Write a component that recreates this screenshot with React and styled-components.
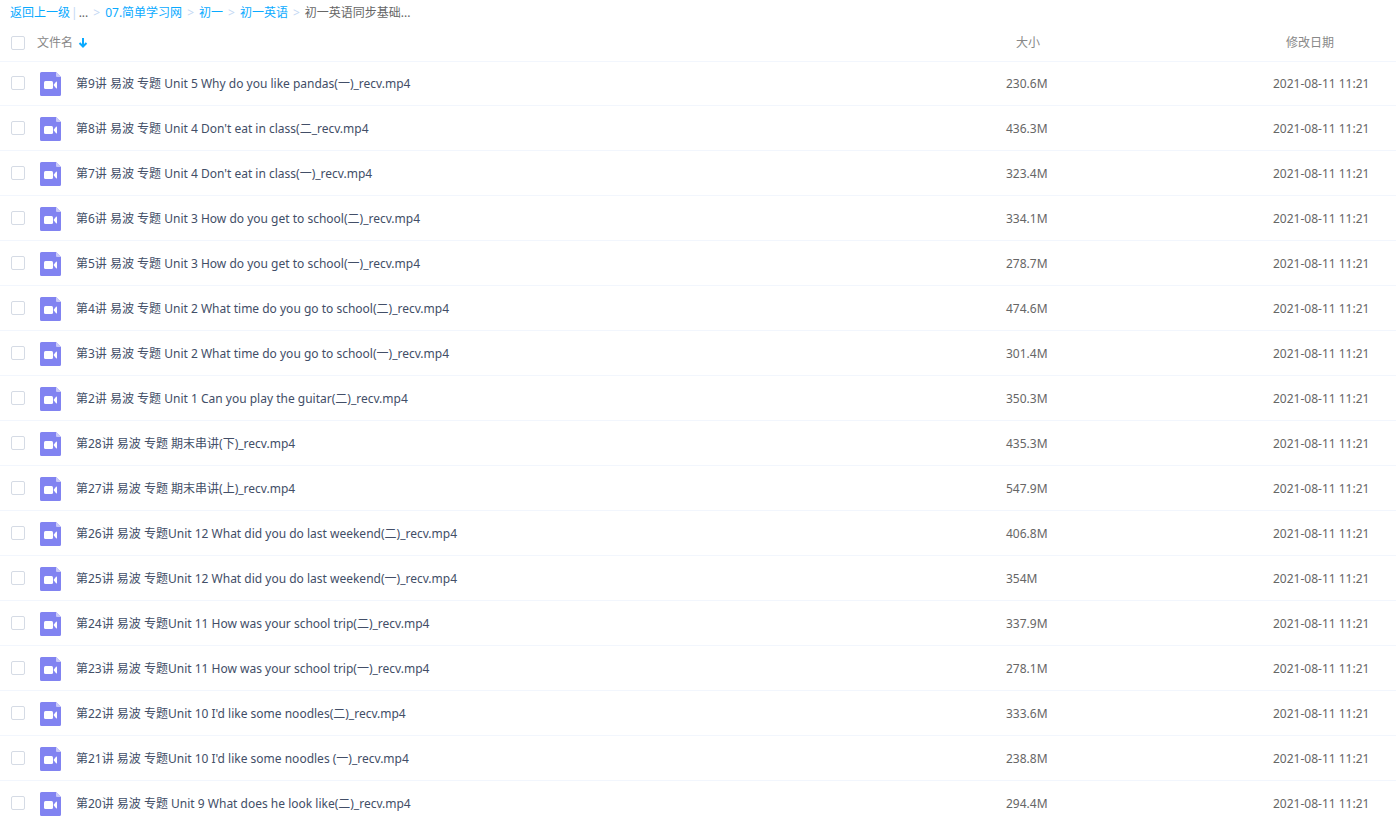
import React from 'react';
import styled, { createGlobalStyle } from "styled-components";

const GlobalStyle = createGlobalStyle`
body{
    margin:0;
    background-color:#fff;
    color:#424e67;
    font-family:"Noto Sans", "Noto Sans CJK SC", sans-serif;
    font-size:12px;
    line-height:16px;
}
`;

const Page = styled.main`
overflow:hidden;
`;

const Breadcrumb = styled.nav`
display:flex;
align-items:center;
height:22px;
padding:2px 10px 0;
white-space:nowrap;
`;

const CrumbLink = styled.a`
color:#09aaff;
text-decoration:none;
`;

const CrumbText = styled.span`
color:#666;
`;

const Separator = styled.span`
margin:0 ${(props) => (props.$narrow ? "1px" : "5px")};
color:#c4d8f4;
`;

const FileTable = styled.table`
width:100%;
table-layout:fixed;
border-collapse:separate;
border-spacing:0;
`;

const Col = styled.col`
width:${(props) => props.$width};
`;

const HeadCell = styled.th`
height:36px;
padding:1px 0 0 ${(props) => props.$indent || "0"};
border-bottom:1px solid #f2f6fd;
color:#888;
font-weight:normal;
text-align:left;
`;

const Cell = styled.td`
padding:2px 0 0;
border-bottom:1px solid #f2f6fd;
color:#666;
white-space:nowrap;
`;

const CheckCell = styled(Cell)`
padding-top:0;
`;

const Row = styled.tr`
height:45px;

&:first-child{
    height:44px;
}

&:first-child > td{
    padding-bottom:1px;
}
`;

const Checkbox = styled.input`
appearance:none;
display:block;
width:14px;
height:14px;
margin:0 0 0 11px;
border:1px solid #d5dbe5;
border-radius:2px;
background-color:#fff;

&:checked{
    border-color:#09aaff;
    background-color:#09aaff;
}
`;

const SortButton = styled.button`
display:flex;
align-items:center;
gap:5px;
padding:0 0 0 1px;
border:0;
background:none;
color:inherit;
font:inherit;
`;

const FileName = styled.label`
display:flex;
align-items:center;
gap:15px;
padding-left:4px;
color:#424e67;
`;

const FileSvg = styled.svg`
flex:none;
`;

const DATE = "2021-08-11 11:21";

const files = [
    { name: "第9讲 易波 专题 Unit 5 Why do you like pandas(一)_recv.mp4", size: "230.6M" },
    { name: "第8讲 易波 专题 Unit 4 Don't eat in class(二_recv.mp4", size: "436.3M" },
    { name: "第7讲 易波 专题 Unit 4 Don't eat in class(一)_recv.mp4", size: "323.4M" },
    { name: "第6讲 易波 专题 Unit 3 How do you get to school(二)_recv.mp4", size: "334.1M" },
    { name: "第5讲 易波 专题 Unit 3 How do you get to school(一)_recv.mp4", size: "278.7M" },
    { name: "第4讲 易波 专题 Unit 2 What time do you go to school(二)_recv.mp4", size: "474.6M" },
    { name: "第3讲 易波 专题 Unit 2 What time do you go to school(一)_recv.mp4", size: "301.4M" },
    { name: "第2讲 易波 专题 Unit 1 Can you play the guitar(二)_recv.mp4", size: "350.3M" },
    { name: "第28讲 易波 专题 期末串讲(下)_recv.mp4", size: "435.3M" },
    { name: "第27讲 易波 专题 期末串讲(上)_recv.mp4", size: "547.9M" },
    { name: "第26讲 易波 专题Unit 12 What did you do last weekend(二)_recv.mp4", size: "406.8M" },
    { name: "第25讲 易波 专题Unit 12 What did you do last weekend(一)_recv.mp4", size: "354M" },
    { name: "第24讲 易波 专题Unit 11 How was your school trip(二)_recv.mp4", size: "337.9M" },
    { name: "第23讲 易波 专题Unit 11 How was your school trip(一)_recv.mp4", size: "278.1M" },
    { name: "第22讲 易波 专题Unit 10 I'd like some noodles(二)_recv.mp4", size: "333.6M" },
    { name: "第21讲 易波 专题Unit 10 I'd like some noodles (一)_recv.mp4", size: "238.8M" },
    { name: "第20讲 易波 专题 Unit 9 What does he look like(二)_recv.mp4", size: "294.4M" },
];

const VideoIcon = () => (
    <FileSvg width="21" height="24" viewBox="0 0 21 24" aria-hidden="true">
        <path d="M1.5 0H16l5 5v17.5a1.5 1.5 0 0 1-1.5 1.5h-18A1.5 1.5 0 0 1 0 22.5v-21A1.5 1.5 0 0 1 1.5 0z" fill="#8183f1" />
        <path d="M16 0l5 5h-4a1 1 0 0 1-1-1z" fill="#c9caf9" />
        <rect x="4" y="9" width="9" height="8" rx="1.5" fill="#fff" />
        <path d="M13.5 13L16 9.8q1-.8 1 .4v5.6q0 1.200-1 .4z" fill="#fff" />
    </FileSvg>
);

const SortArrow = () => (
    <svg width="10" height="10" viewBox="0 0 10 10" aria-hidden="true">
        <path d="M5 0v8M1.5 5L5 8.5 8.5 5" fill="none" stroke="#09aaff" strokeWidth="2" />
    </svg>
);

const FileRow = ({ id, file }) => (
    <Row>
        <CheckCell><Checkbox type="checkbox" id={id} /></CheckCell>
        <Cell>
            <FileName htmlFor={id}>
                <VideoIcon />
                {file.name}
            </FileName>
        </Cell>
        <Cell>{file.size}</Cell>
        <Cell>{DATE}</Cell>
    </Row>
);

const App = () => {
    return (
        <Page lang="zh-CN">
            <GlobalStyle />
            <Breadcrumb>
                <CrumbLink href="#back">返回上一级</CrumbLink>
                <Separator $narrow>|</Separator>
                <CrumbText>...</CrumbText>
                <Separator>&gt;</Separator>
                <CrumbLink href="#site">07.简单学习网</CrumbLink>
                <Separator>&gt;</Separator>
                <CrumbLink href="#grade">初一</CrumbLink>
                <Separator>&gt;</Separator>
                <CrumbLink href="#english">初一英语</CrumbLink>
                <Separator>&gt;</Separator>
                <CrumbText>初一英语同步基础...</CrumbText>
            </Breadcrumb>
            <FileTable>
                <colgroup>
                    <Col $width="36px" />
                    <Col />
                    <Col $width="267px" />
                    <Col $width="123px" />
                </colgroup>
                <thead>
                    <tr>
                        <HeadCell><Checkbox type="checkbox" aria-label="全选" /></HeadCell>
                        <HeadCell>
                            <SortButton type="button">文件名 <SortArrow /></SortButton>
                        </HeadCell>
                        <HeadCell $indent="10px">大小</HeadCell>
                        <HeadCell $indent="13px">修改日期</HeadCell>
                    </tr>
                </thead>
                <tbody>
                    {files.map((file, index) => (
                        <FileRow key={file.name} id={`file-${index}`} file={file} />
                    ))}
                </tbody>
            </FileTable>
        </Page>
    )
}

export default App;
